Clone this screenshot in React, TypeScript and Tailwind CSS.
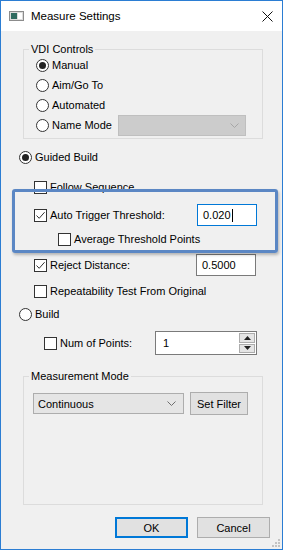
import React from "react";

function Radio({ checked }: { checked?: boolean }) {
  return (
    <span className="flex h-[13px] w-[13px] shrink-0 items-center justify-center rounded-full border border-[#333333] bg-white">
      {checked && <span className="h-[7px] w-[7px] rounded-full bg-[#222222]" />}
    </span>
  );
}

function Check({ checked }: { checked?: boolean }) {
  return (
    <span className="flex h-[13px] w-[13px] shrink-0 items-center justify-center border border-[#333333] bg-white">
      {checked && (
        <svg width="11" height="11" viewBox="0 0 11 11">
          <path d="M1.5 5.5 L4.2 8.3 L9.6 2.2" fill="none" stroke="#333" strokeWidth="1" />
        </svg>
      )}
    </span>
  );
}

function Chevron({ color }: { color: string }) {
  return (
    <svg width="9" height="5" viewBox="0 0 9 5">
      <path d="M0.5 0.5 L4.5 4.5 L8.5 0.5" fill="none" stroke={color} strokeWidth="1" />
    </svg>
  );
}

const vdiOptions = ["Manual", "Aim/Go To", "Automated"];

export default function App() {
  return (
    <div className="relative flex h-[550px] w-[283px] flex-col overflow-hidden border border-[#2b7dd3] bg-[#f0f0f0] font-['Liberation_Sans',Arial,sans-serif] text-[11px] leading-[14px] text-black">
      {/* title bar */}
      <div className="flex h-[30px] shrink-0 items-center bg-white pl-[8px] pr-[9px]">
        <svg width="15" height="10" viewBox="0 0 15 10">
          <rect x="0.5" y="0.5" width="14" height="9" fill="#dcdcdc" stroke="#8c8c8c" />
          <rect x="2" y="2" width="6" height="6" fill="#2f6b60" />
          <rect x="9" y="2" width="4" height="6" fill="#ffffff" />
        </svg>
        <span className="ml-[7px] text-[11.5px]">Measure Settings</span>
        <svg className="ml-auto" width="11" height="11" viewBox="0 0 11 11">
          <path d="M0.5 0.5 L10.5 10.5 M10.5 0.5 L0.5 10.5" stroke="#111" strokeWidth="1" />
        </svg>
      </div>

      {/* VDI Controls */}
      <fieldset className="ml-[22px] mt-[12px] w-[240px] border border-[#dcdcdc]">
        <legend className="ml-[5px] px-[2px] leading-[12px]">VDI Controls</legend>
        <div className="flex flex-col pb-[3px] pl-[12px] pr-[16px]">
          {vdiOptions.map((label, i) => (
            <div key={label} className="flex h-[20px] items-center gap-[3px]">
              <Radio checked={i === 0} />
              <span>{label}</span>
            </div>
          ))}
          <div className="flex h-[20px] items-center gap-[3px]">
            <Radio />
            <span>Name Mode</span>
            <div className="ml-auto flex h-[21px] w-[128px] items-center justify-end border border-[#bfbfbf] bg-[#cccccc] pr-[6px]">
              <Chevron color="#a6a6a6" />
            </div>
          </div>
        </div>
      </fieldset>

      {/* Guided Build */}
      <div className="ml-[18px] mt-[8px] flex h-[20px] items-center gap-[3px]">
        <Radio checked />
        <span>Guided Build</span>
      </div>
      <div className="ml-[33px] mt-[10px] flex h-[20px] items-center gap-[3px]">
        <Check />
        <span>Follow Sequence</span>
      </div>
      <div className="ml-[33px] mt-[6px] flex h-[24px] items-center gap-[3px] pr-[25px]">
        <Check checked />
        <span>Auto Trigger Threshold:</span>
        <div className="ml-auto flex h-[22px] w-[60px] items-center border border-[#0078d7] bg-white pl-[5px]">
          <span>0.020</span>
          <span className="ml-px h-[13px] w-px bg-black" />
        </div>
      </div>
      <div className="ml-[57px] mt-[2px] flex h-[20px] items-center gap-[3px]">
        <Check />
        <span>Average Threshold Points</span>
      </div>
      <div className="ml-[33px] mt-[4px] flex h-[24px] items-center gap-[3px] pr-[26px]">
        <Check checked />
        <span>Reject Distance:</span>
        <div className="ml-auto flex h-[22px] w-[60px] items-center border border-[#7a7a7a] bg-white pl-[5px]">
          0.5000
        </div>
      </div>
      <div className="ml-[33px] mt-[4px] flex h-[20px] items-center gap-[3px]">
        <Check />
        <span>Repeatability Test From Original</span>
      </div>

      {/* Build */}
      <div className="ml-[18px] mt-[3px] flex h-[20px] items-center gap-[3px]">
        <Radio />
        <span>Build</span>
      </div>
      <div className="ml-[43px] mt-[7px] flex h-[24px] items-center gap-[3px] pr-[25px]">
        <Check />
        <span>Num of Points:</span>
        <div className="ml-auto flex h-[24px] w-[102px] border border-[#7a7a7a] bg-white">
          <span className="flex flex-1 items-center pl-[7px]">1</span>
          <div className="flex w-[17px] flex-col gap-px py-px pr-px">
            <div className="flex flex-1 items-center justify-center border border-[#acacac] bg-[#e5e5e5]">
              <svg width="7" height="4" viewBox="0 0 7 4">
                <path d="M3.5 0 L7 4 L0 4 Z" fill="#222" />
              </svg>
            </div>
            <div className="flex flex-1 items-center justify-center border border-[#acacac] bg-[#e5e5e5]">
              <svg width="7" height="4" viewBox="0 0 7 4">
                <path d="M0 0 L7 0 L3.5 4 Z" fill="#222" />
              </svg>
            </div>
          </div>
        </div>
      </div>

      {/* Measurement Mode */}
      <fieldset className="ml-[22px] mt-[15px] h-[135px] w-[240px] border border-[#dcdcdc]">
        <legend className="ml-[5px] px-[2px] leading-[12px]">Measurement Mode</legend>
        <div className="mt-[10px] flex h-[23px] items-center pl-[9px]">
          <div className="flex h-[21px] w-[151px] items-center justify-between border border-[#adadad] bg-[#e5e5e5] pl-[4px] pr-[7px]">
            <span>Continuous</span>
            <Chevron color="#6e6e6e" />
          </div>
          <div className="ml-[6px] flex h-[23px] w-[58px] items-center justify-center border border-[#adadad] bg-[#e1e1e1]">
            Set Filter
          </div>
        </div>
      </fieldset>

      {/* buttons */}
      <div className="mt-[12px] flex justify-end gap-[9px] pr-[12px]">
        <div className="flex h-[21px] w-[73px] items-center justify-center border-2 border-[#0078d7] bg-[#e1e1e1]">
          OK
        </div>
        <div className="flex h-[21px] w-[73px] items-center justify-center border border-[#adadad] bg-[#e1e1e1]">
          Cancel
        </div>
      </div>

      {/* resize grip */}
      <svg className="absolute bottom-[2px] right-[2px]" width="8" height="8" viewBox="0 0 8 8">
        <rect x="6" y="0" width="2" height="2" fill="#c3c3c3" />
        <rect x="3" y="3" width="2" height="2" fill="#c3c3c3" />
        <rect x="6" y="3" width="2" height="2" fill="#c3c3c3" />
        <rect x="0" y="6" width="2" height="2" fill="#c3c3c3" />
        <rect x="3" y="6" width="2" height="2" fill="#c3c3c3" />
        <rect x="6" y="6" width="2" height="2" fill="#c3c3c3" />
      </svg>

      {/* annotation highlight */}
      <div className="absolute left-[11px] top-[188px] h-[64px] w-[266px] rounded-[3px] border-[3px] border-[#5b87c4] shadow-[1px_2px_3px_rgba(0,0,0,0.25)]" />
    </div>
  );
}
